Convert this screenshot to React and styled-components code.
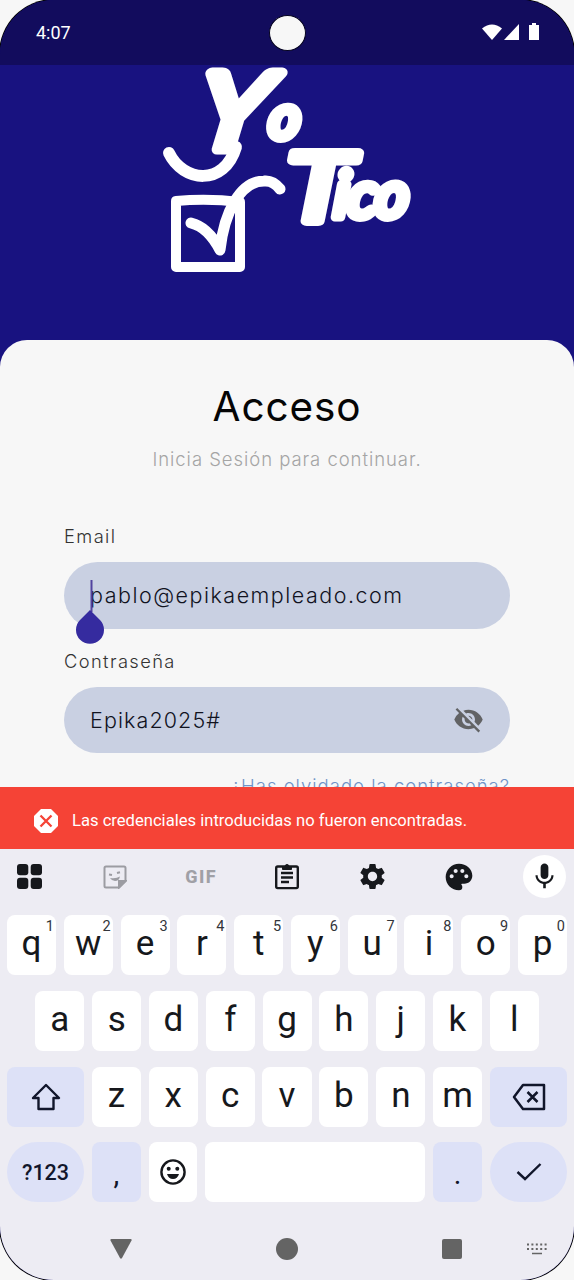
import styled, { createGlobalStyle } from "styled-components";
import { MdMic, MdPalette, MdSettings, MdVisibilityOff } from "react-icons/md";

const GlobalStyle = createGlobalStyle`
  * {
    box-sizing: border-box;
  }

  body {
    margin: 0;
    background-color: #f7f7f7;
  }
`;

const Screen = styled.main`
  width: 574px;
  height: 1280px;
  display: flex;
  flex-direction: column;
  overflow: hidden;
  background-color: #181280;
  border-radius: 54px;
  box-shadow: 0 0 0 1px #000;
  font-family: Roboto, sans-serif;
`;

const StatusBar = styled.header`
  height: 65px;
  flex-shrink: 0;
  padding: 0 34px 0 36px;
  display: grid;
  grid-template-columns: 1fr 36px 1fr;
  align-items: center;
  background-color: #120c5d;
  color: #fff;
  font-size: 18px;
`;

const Camera = styled.div`
  height: 36px;
  margin-left: -1px;
  border-radius: 50%;
  background-color: #f7f7f7;
  border: 1px solid #050320;
`;

const StatusIcons = styled.svg`
  justify-self: end;
`;

const Hero = styled.section`
  height: 275px;
  flex-shrink: 0;
  display: flex;
  justify-content: center;
`;

const LogoArt = styled.svg`
  overflow: visible;
`;

const Panel = styled.section`
  height: 447px;
  flex-shrink: 0;
  padding: 42px 64px 0;
  overflow: hidden;
  display: flex;
  flex-direction: column;
  background-color: #f7f7f7;
  border-radius: 27px 27px 0 0;
  font-family: Inter, sans-serif;
  font-weight: 300;
`;

const Title = styled.h1`
  margin: 0;
  text-align: center;
  line-height: 50px;
  font-size: 40.5px;
  font-weight: 400;
  letter-spacing: 0.9px;
  color: #050505;
`;

const Subtitle = styled.p`
  margin: 14px 0 0;
  text-align: center;
  line-height: 26px;
  font-size: 18.5px;
  letter-spacing: 0.95px;
  color: #a5a5a5;
`;

const Field = styled.label`
  display: flex;
  flex-direction: column;
  margin-top: ${({ $top }) => $top}px;
`;

const Label = styled.span`
  height: 38px;
  line-height: 25px;
  font-size: 18.3px;
  letter-spacing: 1.4px;
  color: #333;
`;

const InputBox = styled.div`
  position: relative;
  height: 66.5px;
  padding: 0 26px;
  display: flex;
  align-items: center;
  justify-content: space-between;
  border-radius: 34px;
  background-color: #c9d0e2;
  color: #11131f;
  font-size: 21.5px;
  letter-spacing: ${({ $spacing }) => $spacing}px;
`;

const Caret = styled.svg`
  position: absolute;
  left: 12px;
  top: 18px;
`;

const Forgot = styled.a`
  margin-top: 20px;
  text-align: right;
  line-height: 26px;
  font-size: 18.5px;
  letter-spacing: 1px;
  color: #6f93c7;
`;

const Snackbar = styled.div`
  height: 62px;
  flex-shrink: 0;
  padding: 5px 34px 0;
  display: flex;
  align-items: center;
  gap: 14px;
  background-color: #f54336;
  color: #fff;
  font-size: 16.6px;
`;

const Keyboard = styled.section`
  flex: 1;
  display: flex;
  flex-direction: column;
  background-color: #edecf3;
  color: #16181c;
`;

const Tools = styled.div`
  height: 66px;
  padding: 5px 7px 0;
  display: grid;
  grid-template-columns: repeat(7, 85.8px);
  justify-content: center;
  align-items: start;
`;

const Tool = styled.div`
  height: 45px;
  display: flex;
  align-items: center;
  justify-content: center;
`;

const GifLabel = styled.span`
  font-size: 18px;
  font-weight: 800;
  letter-spacing: 1.5px;
  color: #a0a0a6;
`;

const MicButton = styled.div`
  width: 43px;
  height: 43px;
  display: flex;
  align-items: center;
  justify-content: center;
  border-radius: 50%;
  background-color: #fff;
`;

const Keys = styled.div`
  padding: 0 7px;
  display: flex;
  flex-direction: column;
  gap: 15.8px;
`;

const KeyRow = styled.div`
  padding: 0 ${({ $inset }) => $inset || 0}px;
  display: flex;
  gap: 7.8px;
`;

const Key = styled.div`
  position: relative;
  height: 60px;
  flex: ${({ $wide }) => ($wide ? "0 0 77px" : "1 1 0")};
  display: flex;
  align-items: center;
  justify-content: center;
  padding-bottom: ${({ $icon }) => ($icon ? 0 : 3)}px;
  border-radius: ${({ $round }) => ($round ? 30 : 8)}px;
  background-color: ${({ $tint }) => ($tint ? "#dde1f7" : "#fff")};
  color: ${({ $tint }) => ($tint ? "#11162b" : "#16181c")};
  font-size: 35px;
`;

const SpaceKey = styled(Key)`
  flex: 0 0 220px;
`;

const SymbolKey = styled(Key)`
  font-size: 21.5px;
  font-weight: 500;
  padding-bottom: 0;
`;

const PunctuationKey = styled(Key)`
  flex: 0 0 49.2px;
  font-size: 29px;
  padding: 4px 0 0;
`;

const Hint = styled.span`
  position: absolute;
  top: 3px;
  right: 2px;
  font-size: 14.5px;
  line-height: 17px;
  color: #33353a;
`;

const NavBar = styled.nav`
  flex: 1;
  padding: 15px 0 0;
  display: grid;
  grid-template-columns: 77px 88px 243px 88px 82px;
  align-items: center;
  justify-items: center;
  color: #646464;
`;

const numbers = "1234567890";

const Logo = () => (
  <LogoArt width="260" height="220" viewBox="157 65 260 220" aria-label="Yo Tico">
    <g
      fill="#fff"
      stroke="#fff"
      strokeLinejoin="round"
      fontFamily="Lato, sans-serif"
      fontStyle="italic"
      fontWeight="400"
    >
      <text transform="translate(193 149) scale(1.14 1) skewX(-8)" fontSize="106" strokeWidth="11">
        Y
      </text>
      <text transform="translate(268 138) skewX(-4)" fontSize="60" strokeWidth="9">
        o
      </text>
      <text transform="translate(284 221) scale(1.28 1) skewX(-2)" fontSize="95" strokeWidth="10">
        T
      </text>
      <text transform="translate(333 217) skewX(-4)" fontSize="64" strokeWidth="9" letterSpacing="-1">
        ico
      </text>
    </g>
    <g fill="none" stroke="#fff" strokeLinecap="round" strokeLinejoin="round">
      <path d="M169 153C183 182 224 187 236 147" strokeWidth="12" />
      <path d="M176 201Q208 198 240 202L240 267L176 267Z" strokeWidth="10" />
      <path d="M191 223Q208 227 220 250C224 213 240 181 264 181Q273 180 280 189" strokeWidth="11" />
    </g>
  </LogoArt>
);

const App = () => {
  return (
    <>
      <GlobalStyle />
      <Screen>
        <StatusBar>
          <span>4:07</span>
          <Camera />
          <StatusIcons width="58" height="20" viewBox="0 0 58 20" fill="#fff">
            <path d="M0 5.5Q10-2.5 20 5.5L10 17Z" />
            <path d="M22 17L37 1V17Z" />
            <path d="M47 2h3V0h4v2h3v15H47Z" />
          </StatusIcons>
        </StatusBar>

        <Hero>
          <Logo />
        </Hero>

        <Panel>
          <Title>Acceso</Title>
          <Subtitle>Inicia Sesión para continuar.</Subtitle>

          <Field $top={52}>
            <Label>Email</Label>
            <InputBox $spacing={1.5}>
              <span>pablo@epikaempleado.com</span>
              <Caret width="29" height="64" viewBox="0 0 29 64">
                <path d="M15.5 0v32" stroke="#51439f" strokeWidth="2" />
                <path d="M14 30L24 40A14 14 0 1 1 4 40Z" fill="#352b9f" />
              </Caret>
            </InputBox>
          </Field>

          <Field $top={20}>
            <Label>Contraseña</Label>
            <InputBox $spacing={1.1}>
              <span>Epika2025#</span>
              <MdVisibilityOff size={31} color="#626365" />
            </InputBox>
          </Field>

          <Forgot>¿Has olvidado la contraseña?</Forgot>
        </Panel>

        <Snackbar>
          <svg width="24" height="24" viewBox="0 0 24 24">
            <path d="M7 0H17L24 7V17L17 24H7L0 17V7Z" fill="#fff" />
            <path d="M6.5 6.5l11 11M17.5 6.5l-11 11" stroke="#f54336" strokeWidth="2.3" />
          </svg>
          <span>Las credenciales introducidas no fueron encontradas.</span>
        </Snackbar>

        <Keyboard>
          <Tools>
            <Tool>
              <svg width="25" height="25" viewBox="0 0 25 25" fill="currentColor">
                <rect width="11.3" height="11.3" rx="3" />
                <rect x="13.7" width="11.3" height="11.3" rx="3" />
                <rect y="13.7" width="11.3" height="11.3" rx="3" />
                <rect x="13.7" y="13.7" width="11.3" height="11.3" rx="3" />
              </svg>
            </Tool>
            <Tool>
              <svg width="24" height="24" viewBox="0 0 24 24" fill="none" stroke="#9c9ca2" strokeWidth="2">
                <path d="M3 1.5H21Q22.5 1.5 22.5 3V16L16 22.5H3Q1.5 22.5 1.5 21V3Q1.5 1.5 3 1.5Z" />
                <path d="M22.5 16H16V22.5Z" fill="#9c9ca2" />
                <path d="M6 9.5l3 .6M14 8l3-.8" />
                <path d="M7 13Q13 14 17 11.5Q16 16 12 16Q9 16 7 13Z" fill="#9c9ca2" stroke="none" />
              </svg>
            </Tool>
            <Tool>
              <GifLabel>GIF</GifLabel>
            </Tool>
            <Tool>
              <svg width="24" height="27" viewBox="0 0 24 27" fill="none" stroke="currentColor" strokeWidth="2.4">
                <rect x="1.2" y="3.5" width="21.6" height="21.6" rx="1.5" />
                <path d="M6 10h12M6 14.5h12M6 19h8" />
                <path d="M7.5 3.5h2.5a2 2 0 0 1 4 0h2.5v3h-9Z" fill="currentColor" strokeWidth="1" />
              </svg>
            </Tool>
            <Tool>
              <MdSettings size={31} />
            </Tool>
            <Tool>
              <MdPalette size={32} />
            </Tool>
            <Tool>
              <MicButton>
                <MdMic size={31} />
              </MicButton>
            </Tool>
          </Tools>

          <Keys>
            <KeyRow>
              {[..."qwertyuiop"].map((letter, i) => (
                <Key key={letter}>
                  {letter}
                  <Hint>{numbers[i]}</Hint>
                </Key>
              ))}
            </KeyRow>
            <KeyRow $inset={28.4}>
              {[..."asdfghjkl"].map((letter) => (
                <Key key={letter}>{letter}</Key>
              ))}
            </KeyRow>
            <KeyRow>
              <Key $wide $tint $icon>
                <svg width="30" height="28" viewBox="0 0 30 28" fill="none" stroke="currentColor" strokeWidth="2.4" strokeLinejoin="round">
                  <path d="M15 2L28 15H22.5V26H7.5V15H2Z" />
                </svg>
              </Key>
              {[..."zxcvbnm"].map((letter) => (
                <Key key={letter}>{letter}</Key>
              ))}
              <Key $wide $tint $icon>
                <svg width="34" height="28" viewBox="0 0 34 28" fill="none" stroke="currentColor" strokeWidth="2.5" strokeLinejoin="round">
                  <path d="M11 2H32V26H11L2 14Z" />
                  <path d="M15.5 9l10 10M25.5 9l-10 10" />
                </svg>
              </Key>
            </KeyRow>
            <KeyRow>
              <SymbolKey $wide $tint $round>
                ?123
              </SymbolKey>
              <PunctuationKey $tint>,</PunctuationKey>
              <Key $icon>
                <svg width="26" height="26" viewBox="0 0 26 26" fill="currentColor">
                  <circle cx="13" cy="13" r="11.6" fill="none" stroke="currentColor" strokeWidth="2.4" />
                  <circle cx="8.7" cy="9.7" r="2" />
                  <circle cx="17.3" cy="9.7" r="2" />
                  <path d="M7 15H19Q17.5 20 13 20Q8.5 20 7 15Z" />
                </svg>
              </Key>
              <SpaceKey />
              <PunctuationKey $tint>.</PunctuationKey>
              <Key $wide $tint $round $icon>
                <svg width="26" height="20" viewBox="0 0 26 20" fill="none" stroke="currentColor" strokeWidth="2.4">
                  <path d="M1.5 10L9 17L24.5 2" />
                </svg>
              </Key>
            </KeyRow>
          </Keys>

          <NavBar>
            <span />
            <svg width="22" height="20" viewBox="0 0 22 20" fill="currentColor">
              <path d="M1.5 0h19q1.5 0 1 1.5L12 19q-1 1.5-2 0L.5 1.5Q0 0 1.5 0Z" />
            </svg>
            <svg width="22" height="22" viewBox="0 0 22 22" fill="currentColor">
              <circle cx="11" cy="11" r="11" />
            </svg>
            <svg width="20" height="20" viewBox="0 0 20 20" fill="currentColor">
              <rect width="20" height="20" rx="2" />
            </svg>
            <svg width="20" height="12" viewBox="0 0 20 12" stroke="currentColor" strokeWidth="2">
              <path d="M0 1.5h20M0 6h20" strokeDasharray="2 2.4" />
              <path d="M5 10.5h10" strokeWidth="1.5" />
            </svg>
          </NavBar>
        </Keyboard>
      </Screen>
    </>
  );
};

export default App;
